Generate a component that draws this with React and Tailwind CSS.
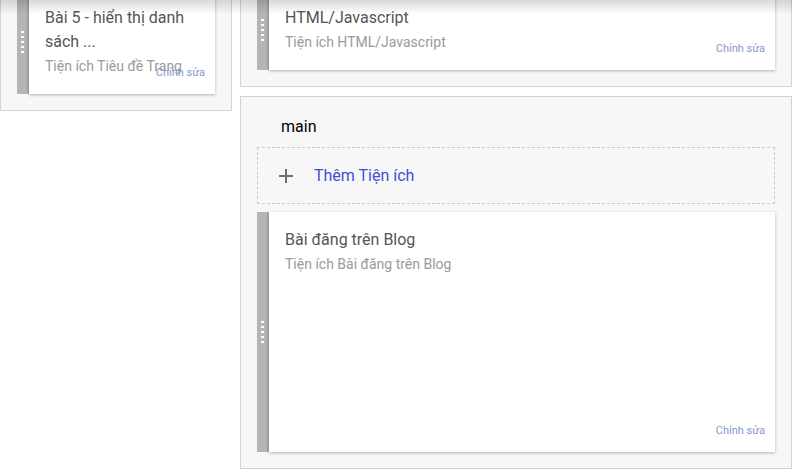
import React from 'react';

const Handle = () => (
  <div className="w-3 shrink-0 bg-[#b5b5b5] shadow-[inset_-2px_0_0_rgba(0,0,0,0.06)] flex flex-col items-center justify-center gap-[3px] pr-[1px]">
    {[0, 1, 2, 3, 4].map((i) => (
      <span key={i} className="block w-[3px] h-[2px] bg-white" />
    ))}
  </div>
);

const WidgetCard = ({ title, subtitle, className = '' }) => (
  <div className={`flex ${className}`}>
    <Handle />
    <div className="relative flex-1 min-w-0 bg-white shadow-[0_1px_3px_rgba(0,0,0,0.28)] px-4 pt-4 pb-4">
      <div className="text-[16px] leading-6 text-[#555]">{title}</div>
      <div className="text-[14px] leading-6 text-[#9a9a9a]">{subtitle}</div>
      <span className="absolute right-[10px] bottom-[14px] text-[11px] leading-[14px] text-[#8796cf]">Chỉnh sửa</span>
    </div>
  </div>
);

export default function App() {
  return (
    <div
      className="relative w-[792px] h-[472px] overflow-hidden bg-white flex items-start gap-2"
      style={{ fontFamily: 'Roboto, "Noto Sans", sans-serif' }}
    >
      {/* left column */}
      <div className="w-[232px] mt-[-27px] border border-[#d3d3d3] bg-[#f7f7f7] p-4">
        <WidgetCard title="Bài 5 - hiển thị danh sách ..." subtitle="Tiện ích Tiêu đề Trang" />
      </div>

      {/* right column */}
      <div className="flex-1 flex flex-col">
        <div className="mt-[-27px] border border-[#d3d3d3] bg-[#f7f7f7] p-4">
          <WidgetCard title="HTML/Javascript" subtitle="Tiện ích HTML/Javascript" />
        </div>

        <div className="mt-[9px] border border-[#d3d3d3] bg-[#f7f7f7] p-4">
          <div className="pl-6 mt-[2px] mb-2 h-6 leading-6 text-[16px] text-black">main</div>
          <div className="h-[57px] border border-dashed border-[#c9c9c9] flex items-center pl-[21px] mb-2">
            <svg width="14" height="14" viewBox="0 0 14 14" className="shrink-0">
              <path d="M7 0v14M0 7h14" stroke="#6f6f6f" strokeWidth="2" />
            </svg>
            <span className="ml-[21px] text-[16px] text-[#3d4fd6]">Thêm Tiện ích</span>
          </div>
          <WidgetCard
            className="h-[240px]"
            title="Bài đăng trên Blog"
            subtitle="Tiện ích Bài đăng trên Blog"
          />
        </div>
      </div>

      {/* header shadow */}
      <div className="pointer-events-none absolute top-0 inset-x-0 h-[14px] bg-gradient-to-b from-black/15 to-transparent" />
    </div>
  );
}
